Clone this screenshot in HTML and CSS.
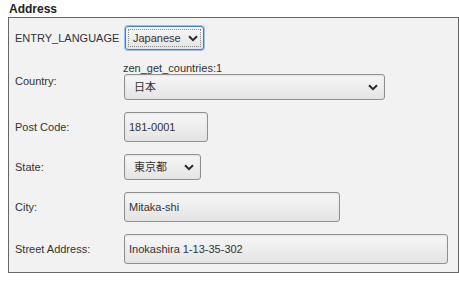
FILE: index.html
```html
<!DOCTYPE html>
<html lang="en">
<head>
    <meta charset="UTF-8">
    <title>Address</title>
    <link rel="stylesheet" href="styles.css">
</head>
<body>
    <h2 class="heading">Address</h2>
    <div class="box">
        <label class="label" for="lang">ENTRY_LANGUAGE</label>
        <div class="field">
            <span class="pick focused">
                <select id="lang" class="sel sel-lang">
                    <option>Japanese</option>
                </select>
                <svg class="chev" width="10" height="7" viewBox="0 0 10 7"><path d="M1 1.2 L5 5.2 L9 1.2" fill="none" stroke="#2b2b2b" stroke-width="2"/></svg>
            </span>
        </div>

        <label class="label" for="country">Country:</label>
        <div class="field">
            <div class="note">zen_get_countries:1</div>
            <span class="pick">
                <select id="country" class="sel sel-country">
                    <option>日本</option>
                </select>
                <svg class="chev" width="10" height="7" viewBox="0 0 10 7"><path d="M1 1.2 L5 5.2 L9 1.2" fill="none" stroke="#2b2b2b" stroke-width="2"/></svg>
            </span>
        </div>

        <label class="label" for="post">Post Code:</label>
        <div class="field">
            <input id="post" class="txt txt-post" type="text" value="181-0001">
        </div>

        <label class="label" for="state">State:</label>
        <div class="field">
            <span class="pick">
                <select id="state" class="sel sel-state">
                    <option>東京都</option>
                </select>
                <svg class="chev" width="10" height="7" viewBox="0 0 10 7"><path d="M1 1.2 L5 5.2 L9 1.2" fill="none" stroke="#2b2b2b" stroke-width="2"/></svg>
            </span>
        </div>

        <label class="label" for="city">City:</label>
        <div class="field">
            <input id="city" class="txt txt-city" type="text" value="Mitaka-shi">
        </div>

        <label class="label" for="street">Street Address:</label>
        <div class="field">
            <input id="street" class="txt txt-street" type="text" value="Inokashira 1-13-35-302">
        </div>
    </div>
</body>
</html>
```

FILE: styles.css
```css
body {
    margin: 2px 0 0 8px;
    background: #fff;
    color: #333;
    font-family: "Liberation Sans", Arial, "Noto Sans CJK JP", sans-serif;
    font-size: 11px;
}
.heading {
    margin: 0 0 1px 1px;
    font-size: 12px;
    line-height: 14px;
    font-weight: bold;
    color: #222;
}
.box {
    box-sizing: border-box;
    width: 451px;
    border: 1px solid #666;
    background: #f2f2f2;
    padding: 8px 6px 8px 6px;
    display: grid;
    grid-template-columns: 109px 1fr;
    row-gap: 12px;
    align-items: center;
}
.label {
    color: #333;
    line-height: 13px;
}
.field {
    display: flex;
    flex-direction: column;
    align-items: flex-start;
}
.note {
    line-height: 12px;
    color: #333;
    margin-left: -1px;
}
.pick {
    position: relative;
    display: inline-block;
}
.chev {
    position: absolute;
    right: 7px;
    top: 50%;
    margin-top: -3px;
    pointer-events: none;
}
.sel, .txt {
    box-sizing: border-box;
    margin: 0;
    font-family: "Liberation Sans", Arial, "Noto Sans CJK JP", sans-serif;
    font-size: 11px;
    color: #333;
    border: 1px solid #909090;
    border-radius: 3px;
    background: linear-gradient(#f7f7f7, #e4e4e4);
    box-shadow: inset 0 1px 2px rgba(0, 0, 0, 0.08);
}
.sel {
    -webkit-appearance: none;
    appearance: none;
    height: 26px;
    padding: 0 20px 0 9px;
}
.sel-lang {
    width: 79px;
    height: 24px;
    margin-left: 1px;
    padding-left: 7px;
    border-color: #3f7fc9;
    box-shadow: 0 0 0 1px #9ec0e8;
    outline: 1px dotted #8a8a8a;
    outline-offset: -4px;
}
.focused .chev {
    right: 6px;
}
.sel-country {
    width: 261px;
}
.sel-state {
    width: 77px;
}
.txt {
    height: 30px;
    padding: 0 4px;
}
.txt-post {
    width: 84px;
}
.txt-city {
    width: 216px;
}
.txt-street {
    width: 324px;
}
```
